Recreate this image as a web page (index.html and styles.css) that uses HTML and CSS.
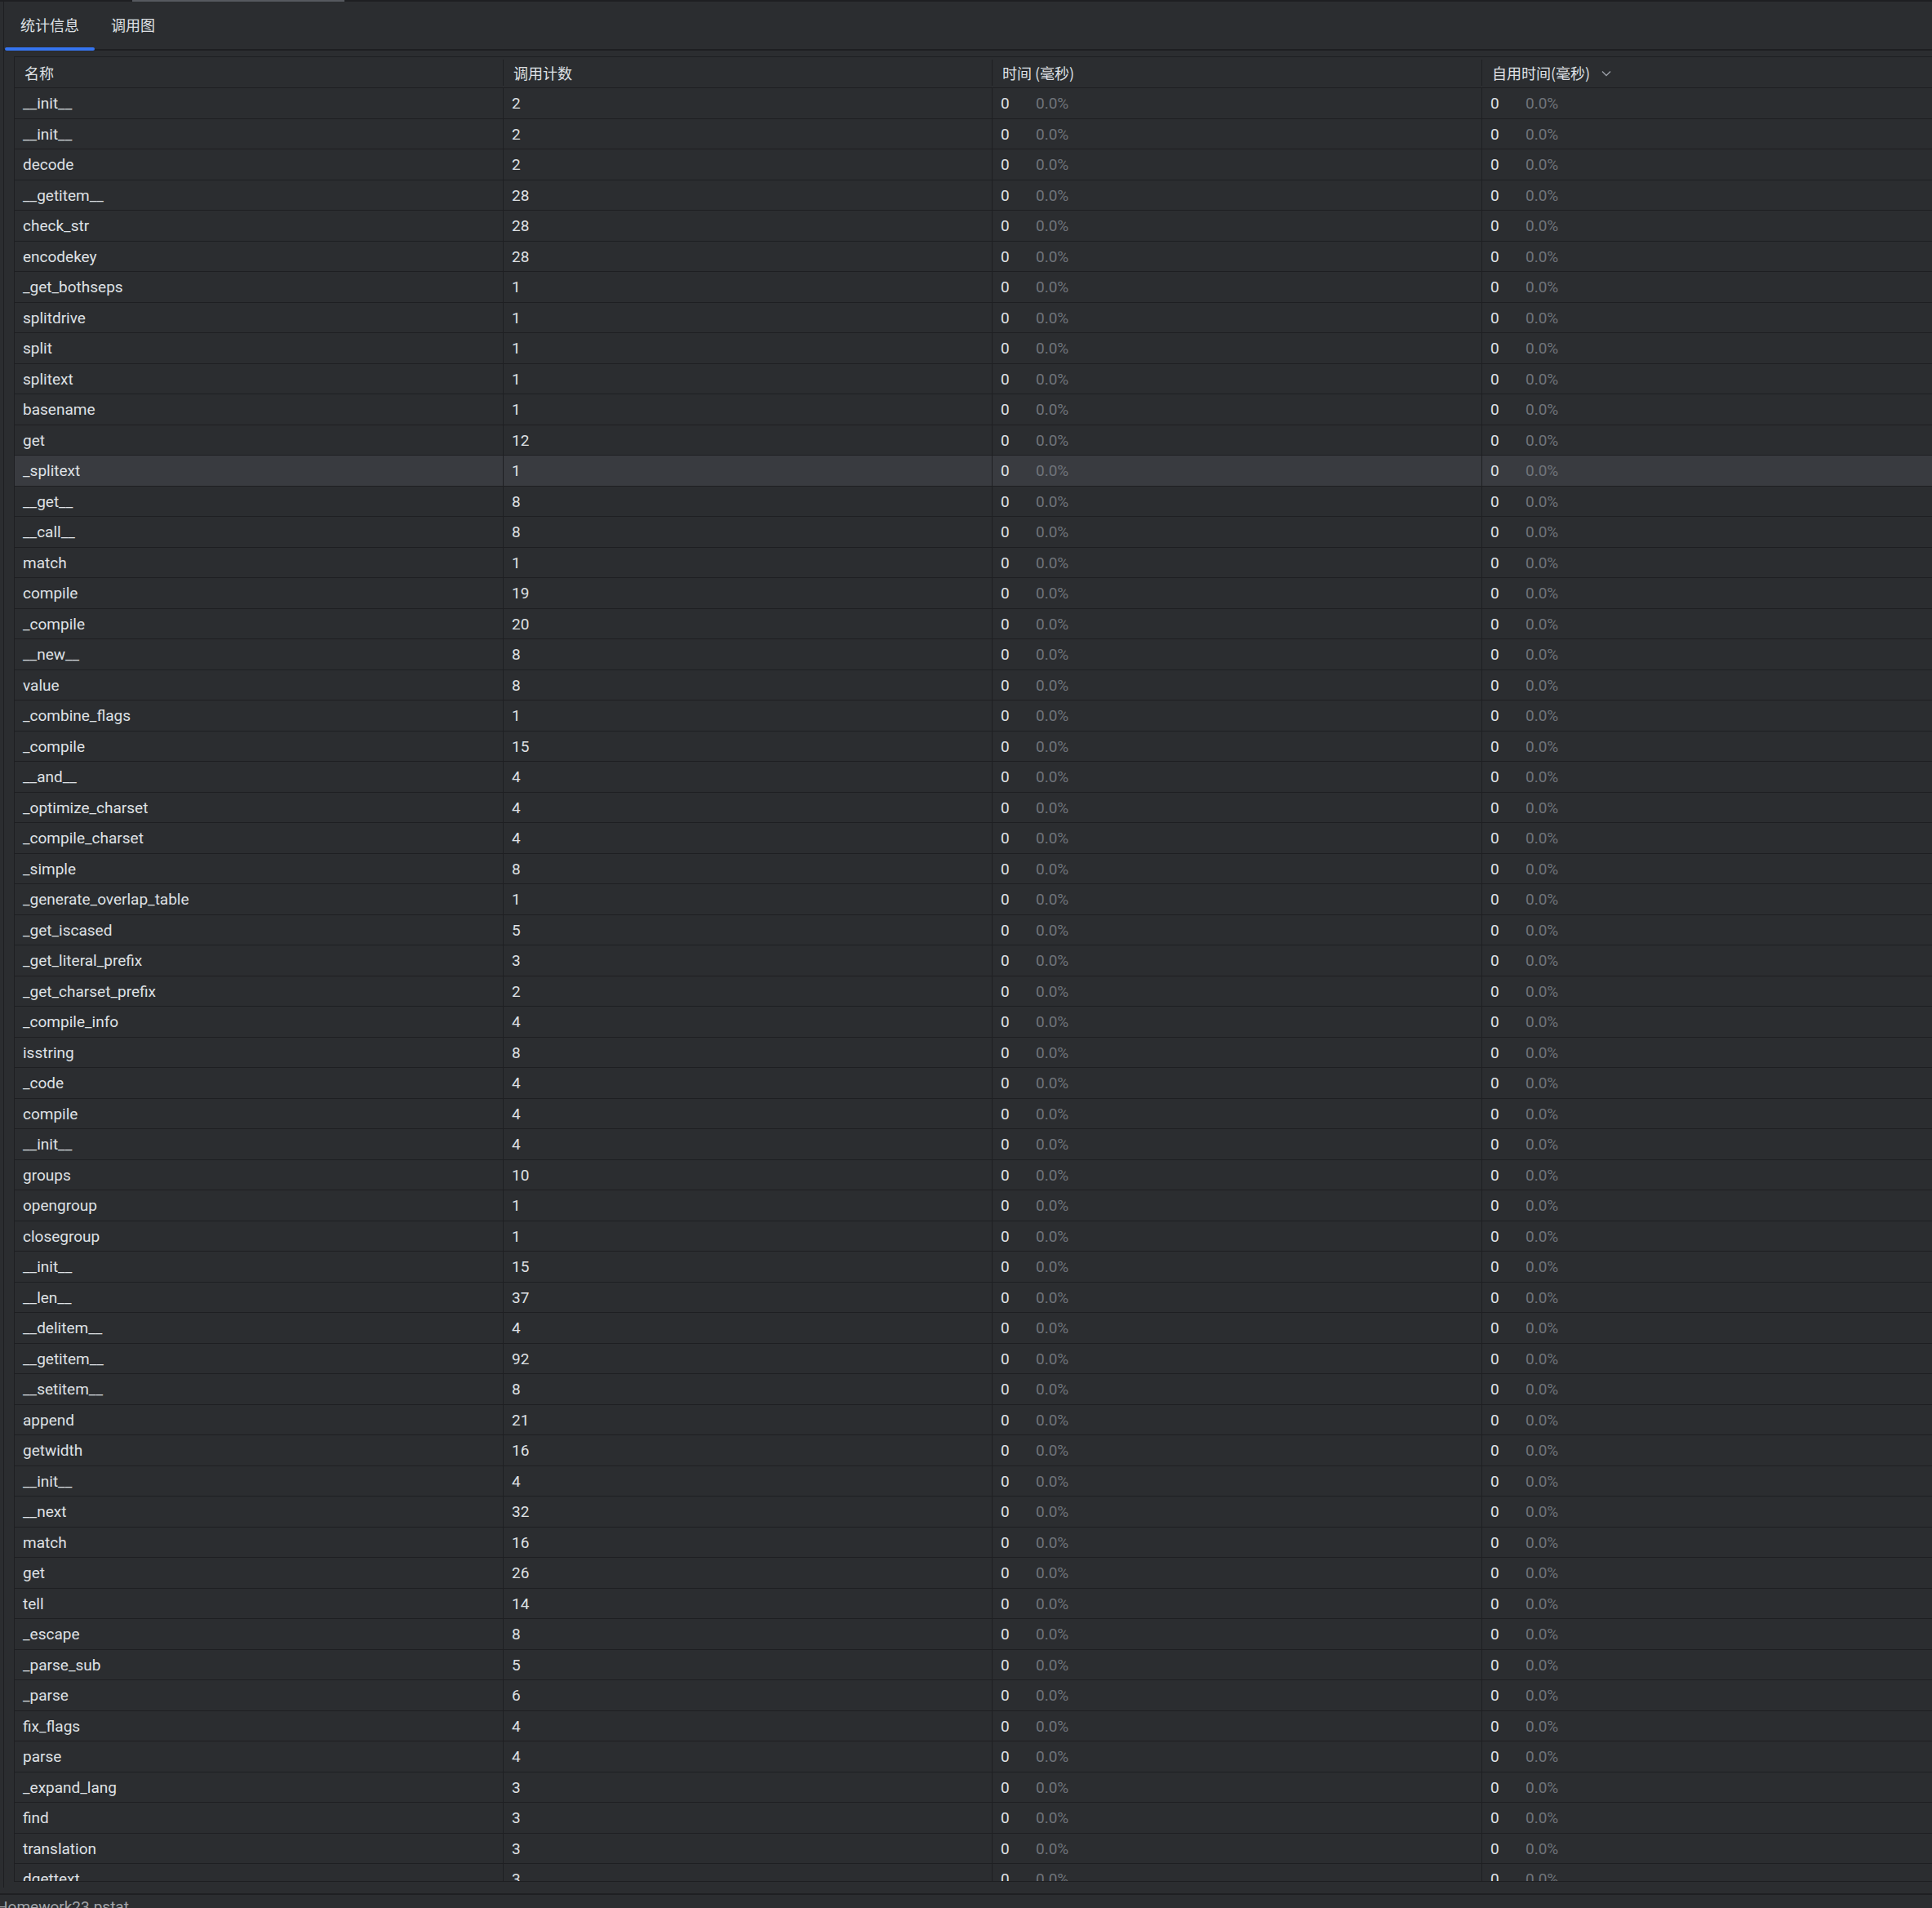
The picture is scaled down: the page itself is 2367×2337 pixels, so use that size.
FILE: index.html
```html
<!DOCTYPE html>
<html lang="zh-CN">
<head>
<meta charset="utf-8">
<title>Homework23.pstat</title>
<link rel="stylesheet" href="styles.css">
</head>
<body>
<div class="app">
  <div class="topstrip"><div class="thumb"></div></div>
  <div class="panel">
    <div class="tabs">
      <div class="tab active">统计信息</div>
      <div class="tab">调用图</div>
    </div>
    <div class="table">
      <div class="row head">
        <div class="cell hcell sep">名称</div>
        <div class="cell hcell sep">调用计数</div>
        <div class="cell hcell sep">时间 (毫秒)</div>
        <div class="cell hcell">自用时间(毫秒)<svg class="chev" width="12" height="8" viewBox="0 0 12 8"><polyline points="1,1.5 6,6.5 11,1.5" fill="none" stroke="#9a9ea6" stroke-width="1.4"/></svg></div>
      </div>
      <div class="body">
        <div class="row"><div class="cell">__init__</div><div class="cell">2</div><div class="cell"><span class="ms">0</span><span class="pct">0.0%</span></div><div class="cell"><span class="ms">0</span><span class="pct">0.0%</span></div></div>
        <div class="row"><div class="cell">__init__</div><div class="cell">2</div><div class="cell"><span class="ms">0</span><span class="pct">0.0%</span></div><div class="cell"><span class="ms">0</span><span class="pct">0.0%</span></div></div>
        <div class="row"><div class="cell">decode</div><div class="cell">2</div><div class="cell"><span class="ms">0</span><span class="pct">0.0%</span></div><div class="cell"><span class="ms">0</span><span class="pct">0.0%</span></div></div>
        <div class="row"><div class="cell">__getitem__</div><div class="cell">28</div><div class="cell"><span class="ms">0</span><span class="pct">0.0%</span></div><div class="cell"><span class="ms">0</span><span class="pct">0.0%</span></div></div>
        <div class="row"><div class="cell">check_str</div><div class="cell">28</div><div class="cell"><span class="ms">0</span><span class="pct">0.0%</span></div><div class="cell"><span class="ms">0</span><span class="pct">0.0%</span></div></div>
        <div class="row"><div class="cell">encodekey</div><div class="cell">28</div><div class="cell"><span class="ms">0</span><span class="pct">0.0%</span></div><div class="cell"><span class="ms">0</span><span class="pct">0.0%</span></div></div>
        <div class="row"><div class="cell">_get_bothseps</div><div class="cell">1</div><div class="cell"><span class="ms">0</span><span class="pct">0.0%</span></div><div class="cell"><span class="ms">0</span><span class="pct">0.0%</span></div></div>
        <div class="row"><div class="cell">splitdrive</div><div class="cell">1</div><div class="cell"><span class="ms">0</span><span class="pct">0.0%</span></div><div class="cell"><span class="ms">0</span><span class="pct">0.0%</span></div></div>
        <div class="row"><div class="cell">split</div><div class="cell">1</div><div class="cell"><span class="ms">0</span><span class="pct">0.0%</span></div><div class="cell"><span class="ms">0</span><span class="pct">0.0%</span></div></div>
        <div class="row"><div class="cell">splitext</div><div class="cell">1</div><div class="cell"><span class="ms">0</span><span class="pct">0.0%</span></div><div class="cell"><span class="ms">0</span><span class="pct">0.0%</span></div></div>
        <div class="row"><div class="cell">basename</div><div class="cell">1</div><div class="cell"><span class="ms">0</span><span class="pct">0.0%</span></div><div class="cell"><span class="ms">0</span><span class="pct">0.0%</span></div></div>
        <div class="row"><div class="cell">get</div><div class="cell">12</div><div class="cell"><span class="ms">0</span><span class="pct">0.0%</span></div><div class="cell"><span class="ms">0</span><span class="pct">0.0%</span></div></div>
        <div class="row selected"><div class="cell">_splitext</div><div class="cell">1</div><div class="cell"><span class="ms">0</span><span class="pct">0.0%</span></div><div class="cell"><span class="ms">0</span><span class="pct">0.0%</span></div></div>
        <div class="row"><div class="cell">__get__</div><div class="cell">8</div><div class="cell"><span class="ms">0</span><span class="pct">0.0%</span></div><div class="cell"><span class="ms">0</span><span class="pct">0.0%</span></div></div>
        <div class="row"><div class="cell">__call__</div><div class="cell">8</div><div class="cell"><span class="ms">0</span><span class="pct">0.0%</span></div><div class="cell"><span class="ms">0</span><span class="pct">0.0%</span></div></div>
        <div class="row"><div class="cell">match</div><div class="cell">1</div><div class="cell"><span class="ms">0</span><span class="pct">0.0%</span></div><div class="cell"><span class="ms">0</span><span class="pct">0.0%</span></div></div>
        <div class="row"><div class="cell">compile</div><div class="cell">19</div><div class="cell"><span class="ms">0</span><span class="pct">0.0%</span></div><div class="cell"><span class="ms">0</span><span class="pct">0.0%</span></div></div>
        <div class="row"><div class="cell">_compile</div><div class="cell">20</div><div class="cell"><span class="ms">0</span><span class="pct">0.0%</span></div><div class="cell"><span class="ms">0</span><span class="pct">0.0%</span></div></div>
        <div class="row"><div class="cell">__new__</div><div class="cell">8</div><div class="cell"><span class="ms">0</span><span class="pct">0.0%</span></div><div class="cell"><span class="ms">0</span><span class="pct">0.0%</span></div></div>
        <div class="row"><div class="cell">value</div><div class="cell">8</div><div class="cell"><span class="ms">0</span><span class="pct">0.0%</span></div><div class="cell"><span class="ms">0</span><span class="pct">0.0%</span></div></div>
        <div class="row"><div class="cell">_combine_flags</div><div class="cell">1</div><div class="cell"><span class="ms">0</span><span class="pct">0.0%</span></div><div class="cell"><span class="ms">0</span><span class="pct">0.0%</span></div></div>
        <div class="row"><div class="cell">_compile</div><div class="cell">15</div><div class="cell"><span class="ms">0</span><span class="pct">0.0%</span></div><div class="cell"><span class="ms">0</span><span class="pct">0.0%</span></div></div>
        <div class="row"><div class="cell">__and__</div><div class="cell">4</div><div class="cell"><span class="ms">0</span><span class="pct">0.0%</span></div><div class="cell"><span class="ms">0</span><span class="pct">0.0%</span></div></div>
        <div class="row"><div class="cell">_optimize_charset</div><div class="cell">4</div><div class="cell"><span class="ms">0</span><span class="pct">0.0%</span></div><div class="cell"><span class="ms">0</span><span class="pct">0.0%</span></div></div>
        <div class="row"><div class="cell">_compile_charset</div><div class="cell">4</div><div class="cell"><span class="ms">0</span><span class="pct">0.0%</span></div><div class="cell"><span class="ms">0</span><span class="pct">0.0%</span></div></div>
        <div class="row"><div class="cell">_simple</div><div class="cell">8</div><div class="cell"><span class="ms">0</span><span class="pct">0.0%</span></div><div class="cell"><span class="ms">0</span><span class="pct">0.0%</span></div></div>
        <div class="row"><div class="cell">_generate_overlap_table</div><div class="cell">1</div><div class="cell"><span class="ms">0</span><span class="pct">0.0%</span></div><div class="cell"><span class="ms">0</span><span class="pct">0.0%</span></div></div>
        <div class="row"><div class="cell">_get_iscased</div><div class="cell">5</div><div class="cell"><span class="ms">0</span><span class="pct">0.0%</span></div><div class="cell"><span class="ms">0</span><span class="pct">0.0%</span></div></div>
        <div class="row"><div class="cell">_get_literal_prefix</div><div class="cell">3</div><div class="cell"><span class="ms">0</span><span class="pct">0.0%</span></div><div class="cell"><span class="ms">0</span><span class="pct">0.0%</span></div></div>
        <div class="row"><div class="cell">_get_charset_prefix</div><div class="cell">2</div><div class="cell"><span class="ms">0</span><span class="pct">0.0%</span></div><div class="cell"><span class="ms">0</span><span class="pct">0.0%</span></div></div>
        <div class="row"><div class="cell">_compile_info</div><div class="cell">4</div><div class="cell"><span class="ms">0</span><span class="pct">0.0%</span></div><div class="cell"><span class="ms">0</span><span class="pct">0.0%</span></div></div>
        <div class="row"><div class="cell">isstring</div><div class="cell">8</div><div class="cell"><span class="ms">0</span><span class="pct">0.0%</span></div><div class="cell"><span class="ms">0</span><span class="pct">0.0%</span></div></div>
        <div class="row"><div class="cell">_code</div><div class="cell">4</div><div class="cell"><span class="ms">0</span><span class="pct">0.0%</span></div><div class="cell"><span class="ms">0</span><span class="pct">0.0%</span></div></div>
        <div class="row"><div class="cell">compile</div><div class="cell">4</div><div class="cell"><span class="ms">0</span><span class="pct">0.0%</span></div><div class="cell"><span class="ms">0</span><span class="pct">0.0%</span></div></div>
        <div class="row"><div class="cell">__init__</div><div class="cell">4</div><div class="cell"><span class="ms">0</span><span class="pct">0.0%</span></div><div class="cell"><span class="ms">0</span><span class="pct">0.0%</span></div></div>
        <div class="row"><div class="cell">groups</div><div class="cell">10</div><div class="cell"><span class="ms">0</span><span class="pct">0.0%</span></div><div class="cell"><span class="ms">0</span><span class="pct">0.0%</span></div></div>
        <div class="row"><div class="cell">opengroup</div><div class="cell">1</div><div class="cell"><span class="ms">0</span><span class="pct">0.0%</span></div><div class="cell"><span class="ms">0</span><span class="pct">0.0%</span></div></div>
        <div class="row"><div class="cell">closegroup</div><div class="cell">1</div><div class="cell"><span class="ms">0</span><span class="pct">0.0%</span></div><div class="cell"><span class="ms">0</span><span class="pct">0.0%</span></div></div>
        <div class="row"><div class="cell">__init__</div><div class="cell">15</div><div class="cell"><span class="ms">0</span><span class="pct">0.0%</span></div><div class="cell"><span class="ms">0</span><span class="pct">0.0%</span></div></div>
        <div class="row"><div class="cell">__len__</div><div class="cell">37</div><div class="cell"><span class="ms">0</span><span class="pct">0.0%</span></div><div class="cell"><span class="ms">0</span><span class="pct">0.0%</span></div></div>
        <div class="row"><div class="cell">__delitem__</div><div class="cell">4</div><div class="cell"><span class="ms">0</span><span class="pct">0.0%</span></div><div class="cell"><span class="ms">0</span><span class="pct">0.0%</span></div></div>
        <div class="row"><div class="cell">__getitem__</div><div class="cell">92</div><div class="cell"><span class="ms">0</span><span class="pct">0.0%</span></div><div class="cell"><span class="ms">0</span><span class="pct">0.0%</span></div></div>
        <div class="row"><div class="cell">__setitem__</div><div class="cell">8</div><div class="cell"><span class="ms">0</span><span class="pct">0.0%</span></div><div class="cell"><span class="ms">0</span><span class="pct">0.0%</span></div></div>
        <div class="row"><div class="cell">append</div><div class="cell">21</div><div class="cell"><span class="ms">0</span><span class="pct">0.0%</span></div><div class="cell"><span class="ms">0</span><span class="pct">0.0%</span></div></div>
        <div class="row"><div class="cell">getwidth</div><div class="cell">16</div><div class="cell"><span class="ms">0</span><span class="pct">0.0%</span></div><div class="cell"><span class="ms">0</span><span class="pct">0.0%</span></div></div>
        <div class="row"><div class="cell">__init__</div><div class="cell">4</div><div class="cell"><span class="ms">0</span><span class="pct">0.0%</span></div><div class="cell"><span class="ms">0</span><span class="pct">0.0%</span></div></div>
        <div class="row"><div class="cell">__next</div><div class="cell">32</div><div class="cell"><span class="ms">0</span><span class="pct">0.0%</span></div><div class="cell"><span class="ms">0</span><span class="pct">0.0%</span></div></div>
        <div class="row"><div class="cell">match</div><div class="cell">16</div><div class="cell"><span class="ms">0</span><span class="pct">0.0%</span></div><div class="cell"><span class="ms">0</span><span class="pct">0.0%</span></div></div>
        <div class="row"><div class="cell">get</div><div class="cell">26</div><div class="cell"><span class="ms">0</span><span class="pct">0.0%</span></div><div class="cell"><span class="ms">0</span><span class="pct">0.0%</span></div></div>
        <div class="row"><div class="cell">tell</div><div class="cell">14</div><div class="cell"><span class="ms">0</span><span class="pct">0.0%</span></div><div class="cell"><span class="ms">0</span><span class="pct">0.0%</span></div></div>
        <div class="row"><div class="cell">_escape</div><div class="cell">8</div><div class="cell"><span class="ms">0</span><span class="pct">0.0%</span></div><div class="cell"><span class="ms">0</span><span class="pct">0.0%</span></div></div>
        <div class="row"><div class="cell">_parse_sub</div><div class="cell">5</div><div class="cell"><span class="ms">0</span><span class="pct">0.0%</span></div><div class="cell"><span class="ms">0</span><span class="pct">0.0%</span></div></div>
        <div class="row"><div class="cell">_parse</div><div class="cell">6</div><div class="cell"><span class="ms">0</span><span class="pct">0.0%</span></div><div class="cell"><span class="ms">0</span><span class="pct">0.0%</span></div></div>
        <div class="row"><div class="cell">fix_flags</div><div class="cell">4</div><div class="cell"><span class="ms">0</span><span class="pct">0.0%</span></div><div class="cell"><span class="ms">0</span><span class="pct">0.0%</span></div></div>
        <div class="row"><div class="cell">parse</div><div class="cell">4</div><div class="cell"><span class="ms">0</span><span class="pct">0.0%</span></div><div class="cell"><span class="ms">0</span><span class="pct">0.0%</span></div></div>
        <div class="row"><div class="cell">_expand_lang</div><div class="cell">3</div><div class="cell"><span class="ms">0</span><span class="pct">0.0%</span></div><div class="cell"><span class="ms">0</span><span class="pct">0.0%</span></div></div>
        <div class="row"><div class="cell">find</div><div class="cell">3</div><div class="cell"><span class="ms">0</span><span class="pct">0.0%</span></div><div class="cell"><span class="ms">0</span><span class="pct">0.0%</span></div></div>
        <div class="row"><div class="cell">translation</div><div class="cell">3</div><div class="cell"><span class="ms">0</span><span class="pct">0.0%</span></div><div class="cell"><span class="ms">0</span><span class="pct">0.0%</span></div></div>
        <div class="row"><div class="cell">dgettext</div><div class="cell">3</div><div class="cell"><span class="ms">0</span><span class="pct">0.0%</span></div><div class="cell"><span class="ms">0</span><span class="pct">0.0%</span></div></div>
      </div>
    </div>
  </div>
  <div class="status"><span class="status-text">Homework23.pstat</span></div>
</div>
</body>
</html>
```

FILE: styles.css
```css
* { box-sizing: border-box; }

html, body {
  margin: 0;
  padding: 0;
  background: #2b2d30;
}

body {
  width: 2367px;
  height: 2337px;
  overflow: hidden;
  font-family: "Roboto", "Noto Sans CJK SC", sans-serif;
  font-size: 19px;
  color: #dfe1e5;
}

.app {
  width: 2367px;
  height: 2337px;
  overflow: hidden;
  display: flex;
  flex-direction: column;
}

.topstrip {
  height: 2px;
  flex: none;
  background: #1e1f22;
  padding-left: 162px;
}

.thumb {
  width: 260px;
  height: 2px;
  background: #56595f;
}

.panel {
  flex: none;
  height: 2310px;
  margin-left: 4px;
  border-left: 1px solid #1e1f22;
  display: flex;
  flex-direction: column;
  overflow: hidden;
}

.tabs {
  flex: none;
  height: 60px;
  border-bottom: 2px solid #1e1f22;
  display: flex;
}

.tab {
  position: relative;
  height: 58px;
  padding: 0 19px 2px 20px;
  display: flex;
  align-items: center;
  font-family: "Noto Sans CJK SC", sans-serif;
  font-size: 18px;
  color: #dfe1e5;
}

.tab.active::after {
  content: "";
  position: absolute;
  left: 1px;
  right: 0;
  bottom: -2px;
  height: 4px;
  border-radius: 2px;
  background: #3574f0;
}

.table {
  flex: none;
  margin: 7px 0 0 12px;
  height: 2236px;
  width: 2400px;
  border: 1px solid #1e1f22;
  display: flex;
  flex-direction: column;
}

.row {
  display: grid;
  grid-template-columns: 599px 599px 600px 1fr;
  height: 37.5px;
  border-bottom: 1px solid #1e1f22;
}

.row.head {
  flex: none;
  height: 38px;
}

.row.selected {
  background: #393b40;
}

.body {
  flex: 1;
  overflow: hidden;
}

.cell {
  display: flex;
  align-items: center;
  padding-left: 10px;
  padding-top: 1px;
  border-right: 1px solid #1e1f22;
  white-space: nowrap;
  overflow: hidden;
}

.hcell {
  padding-left: 12px;
  padding-top: 0;
  border-right: none;
  font-family: "Noto Sans CJK SC", sans-serif;
  font-size: 18px;
}

.hcell.sep {
  background: linear-gradient(#1e1f22, #1e1f22) right center / 1px 32px no-repeat;
}

.chev {
  margin-left: 14px;
  margin-top: 2px;
}

.ms {
  display: inline-block;
  width: 43px;
}

.pct {
  color: #70747b;
}

.status {
  flex: none;
  margin-top: 7px;
  border-top: 2px solid #1e1f22;
  height: 40px;
  padding-top: 3px;
  color: #a3a6ab;
  white-space: nowrap;
}

.status-text {
  display: inline-block;
  margin-left: -4px;
}
```
